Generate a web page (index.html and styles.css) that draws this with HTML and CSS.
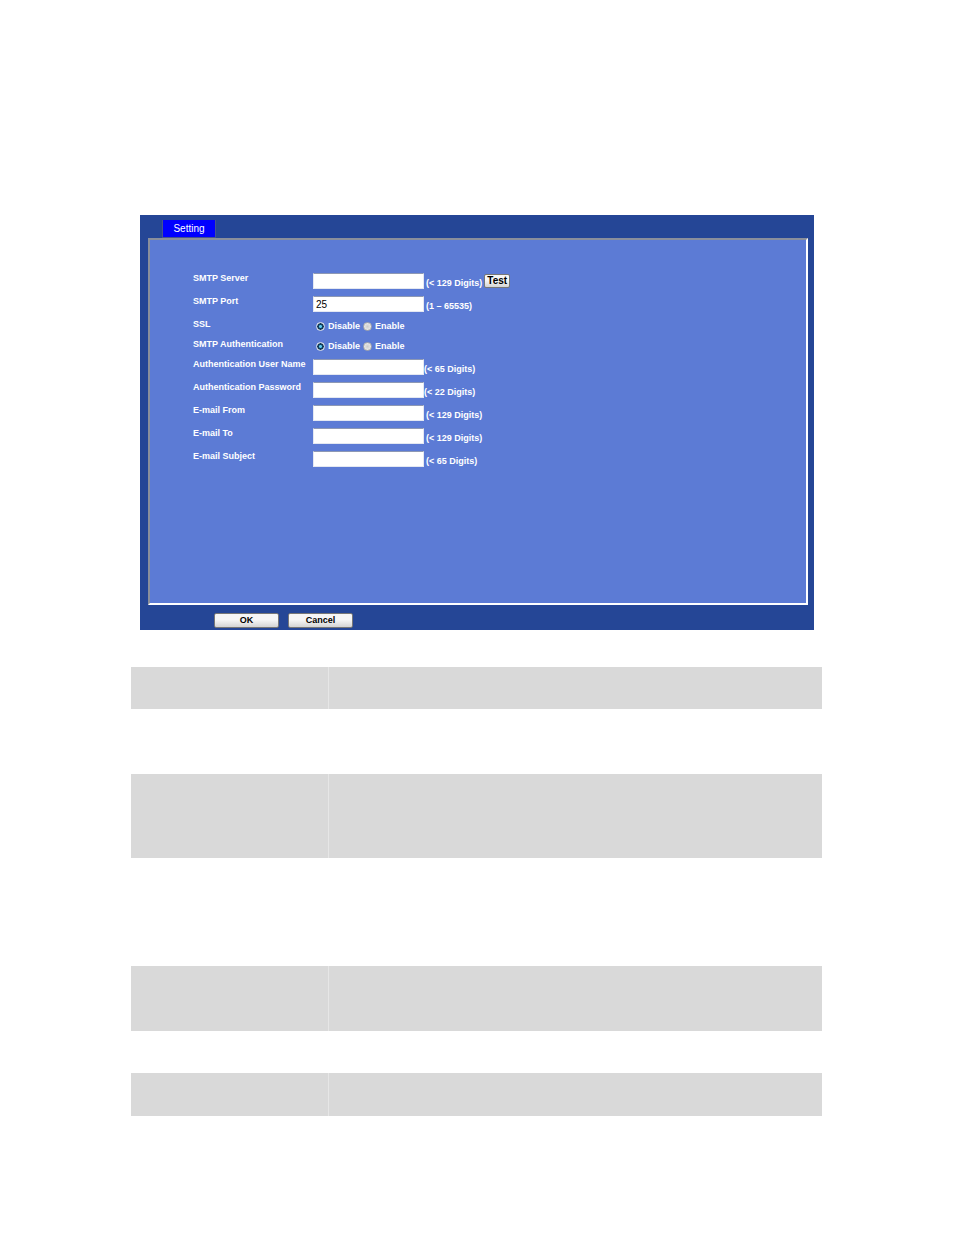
FILE: index.html
```html
<!DOCTYPE html>
<html lang="en">
<head>
<meta charset="utf-8">
<title>SMTP Setting</title>
<link rel="stylesheet" href="styles.css">
</head>
<body>
<main class="page">
  <form class="panel">
    <nav class="tabs"><button type="button" class="tab">Setting</button></nav>
    <div class="inset">
      <div class="row">
        <label class="name" for="server">SMTP Server</label>
        <div class="field"><input class="text" type="text" id="server"><span class="hint">(&lt; 129 Digits)</span><button type="button" class="btn test">Test</button></div>
      </div>
      <div class="row">
        <label class="name" for="port">SMTP Port</label>
        <div class="field"><input class="text" type="text" id="port" value="25"><span class="hint">(1 – 65535)</span></div>
      </div>
      <div class="row short" role="radiogroup" aria-labelledby="ssl">
        <span class="name" id="ssl">SSL</span>
        <div class="choices">
          <label class="choice"><input class="radio" type="radio" name="ssl" checked>Disable</label>
          <label class="choice"><input class="radio" type="radio" name="ssl">Enable</label>
        </div>
      </div>
      <div class="row short" role="radiogroup" aria-labelledby="auth">
        <span class="name" id="auth">SMTP Authentication</span>
        <div class="choices">
          <label class="choice"><input class="radio" type="radio" name="auth" checked>Disable</label>
          <label class="choice"><input class="radio" type="radio" name="auth">Enable</label>
        </div>
      </div>
      <div class="row">
        <label class="name" for="user">Authentication User Name</label>
        <div class="field tight"><input class="text" type="text" id="user"><span class="hint">(&lt; 65 Digits)</span></div>
      </div>
      <div class="row">
        <label class="name" for="pass">Authentication Password</label>
        <div class="field tight"><input class="text" type="password" id="pass"><span class="hint">(&lt; 22 Digits)</span></div>
      </div>
      <div class="row">
        <label class="name" for="from">E-mail From</label>
        <div class="field"><input class="text" type="text" id="from"><span class="hint">(&lt; 129 Digits)</span></div>
      </div>
      <div class="row">
        <label class="name" for="to">E-mail To</label>
        <div class="field"><input class="text" type="text" id="to"><span class="hint">(&lt; 129 Digits)</span></div>
      </div>
      <div class="row">
        <label class="name" for="subject">E-mail Subject</label>
        <div class="field"><input class="text" type="text" id="subject"><span class="hint">(&lt; 65 Digits)</span></div>
      </div>
    </div>
    <div class="actions">
      <button type="button" class="btn wide">OK</button>
      <button type="button" class="btn wide">Cancel</button>
    </div>
  </form>
  <table class="bands">
    <colgroup><col class="first"><col></colgroup>
    <tbody>
      <tr class="shade h42"><td></td><td></td></tr>
      <tr class="h65"><td></td><td></td></tr>
      <tr class="shade h84"><td></td><td></td></tr>
      <tr class="h108"><td></td><td></td></tr>
      <tr class="shade h65"><td></td><td></td></tr>
      <tr class="h42"><td></td><td></td></tr>
      <tr class="shade h43"><td></td><td></td></tr>
    </tbody>
  </table>
</main>
</body>
</html>
```
FILE: styles.css
```css
* { box-sizing: border-box; }
body {
  margin: 0;
  background: #fff;
  color: #fff;
  font: bold 9px/12px "Liberation Sans", Arial, sans-serif;
}
button, input { font: inherit; margin: 0; }
.page { padding: 215px 132px 119px 131px; }
.panel {
  margin: 0 8px 0 9px;
  padding: 5px 6px 2px 8px;
  background: #254696;
}
.tabs { display: flex; padding-left: 14px; }
.tab {
  width: 54px;
  height: 18px;
  padding: 0;
  border: 1px solid #46538f;
  border-top: 0;
  background: #00f;
  color: #fff;
  font-size: 10px;
  font-weight: normal;
}
.inset {
  min-height: 367px;
  padding: 33px 0 0 43px;
  border: 2px solid;
  border-color: #8a8f9c #fff #fff #8a8f9c;
  background: #5c7bd5;
}
.row {
  display: grid;
  grid-template-columns: 120px 1fr;
  height: 23px;
  align-items: start;
}
.short { height: 20px; }
.name { line-height: 11px; }
.field { display: flex; align-items: center; gap: 2px; }
.tight { gap: 0; }
.text {
  width: 111px;
  height: 16px;
  padding: 0 2px;
  border: 1px solid #e4e8f2;
  border-top-color: #8d98b4;
  border-radius: 0;
  background: #fff;
  color: #000;
  font-size: 10px;
  font-weight: normal;
}
.hint { padding-top: 3px; }
.btn {
  padding: 0;
  border: 1px solid #777;
  border-radius: 2px;
  background: linear-gradient(#f6f6f6 45%, #d4d4d4);
  color: #000;
}
.test { width: 26px; height: 14px; font-size: 10px; line-height: 10px; }
.choices { display: flex; gap: 3px; padding: 1px 0 0 3px; }
.choice { display: flex; align-items: center; gap: 3px; }
.radio {
  appearance: none;
  width: 9px;
  height: 9px;
  border: 1px solid #a9a9a9;
  border-radius: 50%;
  background: radial-gradient(#ccc, #f4f4f4);
}
.radio:checked {
  border-color: #d5dbe6;
  background: radial-gradient(circle, #5cc8ee 0 1px, #123c5c 2px 3px, #e8e8e8 4px);
}
.actions { display: flex; gap: 9px; padding: 8px 0 0 66px; }
.wide { width: 65px; height: 15px; line-height: 11px; }
.bands { width: 100%; margin-top: 37px; border-collapse: collapse; table-layout: fixed; }
.first { width: 197px; }
.bands td { padding: 0; }
.shade td { background: #d9d9d9; }
.shade td + td { background: linear-gradient(90deg, #e6e6e6 1px, #d9d9d9 1px); }
.h42 { height: 42px; }
.h43 { height: 43px; }
.h65 { height: 65px; }
.h84 { height: 84px; }
.h108 { height: 108px; }
```
